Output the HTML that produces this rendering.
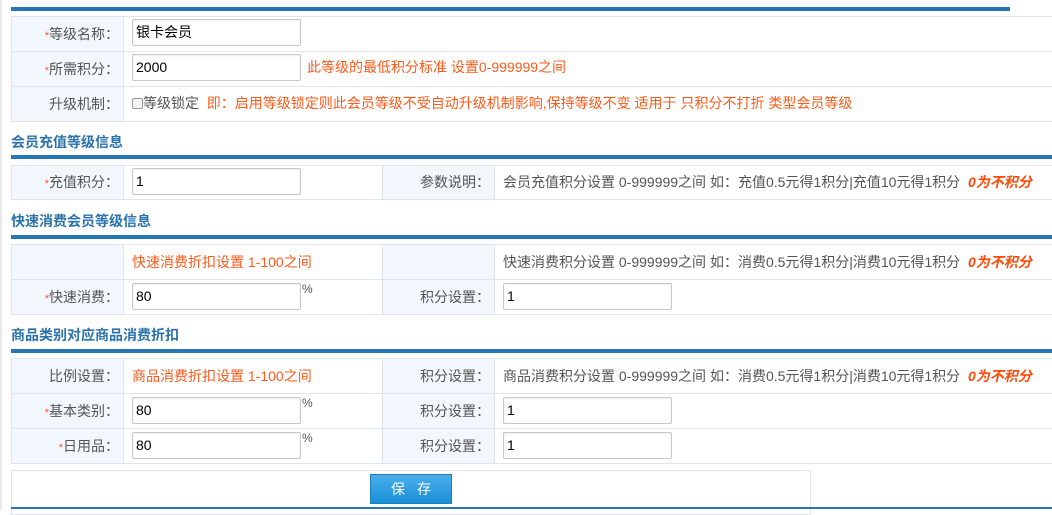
<!DOCTYPE html><html><head><meta charset="utf-8"><style>
*{margin:0;padding:0;box-sizing:border-box}
body{width:1052px;height:509px;background:#fff;font-family:"Liberation Sans","Noto Sans CJK SC",sans-serif;font-size:14px;color:#555;position:relative;overflow:hidden}
.a{position:absolute}
.bar{position:absolute;height:4px;background:#2578b5}
.lb{position:absolute;background:#f1f7fd;border:1px solid #e1e5ea;text-align:right;padding-right:4px;white-space:nowrap}
.vc{position:absolute;background:#fff;border:1px solid #e1e5ea;padding-left:8px;white-space:nowrap}
.s{color:#f53;font-size:11px}
.in{position:absolute;border:1px solid #c8c8c8;border-radius:2px;background:#fff;height:27px;padding-left:3px;line-height:25px;color:#000;font-size:14px;box-shadow:inset 0 1px 2px #eee}
.or{color:#ff5a1a}
.t{position:absolute;left:11px;color:#2a72ad;font-weight:bold;font-size:14px}
.pc{position:absolute;font-size:12px;color:#555}
.bi{color:#ff4a0a;font-weight:bold;font-style:italic}
</style></head><body>
<div class="a" style="left:0;top:0;width:2px;height:509px;background:#e8e8e8"></div>
<div class="bar" style="left:11px;top:7px;width:999px"></div>

<div class="lb" style="left:11px;top:16px;width:113px;height:36px;line-height:34px"><span class="s">*</span>等级名称：</div>
<div class="vc" style="left:123px;top:16px;width:940px;height:36px"></div>
<div class="in" style="left:132px;top:19px;width:169px">银卡会员</div>
<div class="lb" style="left:11px;top:51px;width:113px;height:36px;line-height:34px"><span class="s">*</span>所需积分：</div>
<div class="vc" style="left:123px;top:51px;width:940px;height:36px;line-height:30px;padding-left:183px"><span class="or">此等级的最低积分标准 设置0-999999之间</span></div>
<div class="in" style="left:132px;top:54px;width:169px">2000</div>
<div class="lb" style="left:11px;top:86px;width:113px;height:36px;line-height:34px">升级机制：</div>
<div class="vc" style="left:123px;top:86px;width:940px;height:36px;line-height:32px"><span style="display:inline-block;width:11px;height:11px;border:1px solid #999;border-radius:2px;background:#f4f4f4;vertical-align:-1px"></span>等级锁定 &nbsp;<span class="or">即：启用等级锁定则此会员等级不受自动升级机制影响,保持等级不变 适用于 只积分不打折 类型会员等级</span></div>

<div class="t" style="top:132px">会员充值等级信息</div>
<div class="bar" style="left:11px;top:155px;width:1041px"></div>
<div class="lb" style="left:11px;top:165px;width:113px;height:35px;line-height:33px"><span class="s">*</span>充值积分：</div>
<div class="vc" style="left:123px;top:165px;width:260px;height:35px"></div>
<div class="in" style="left:132px;top:168px;width:169px">1</div>
<div class="lb" style="left:382px;top:165px;width:113px;height:35px;line-height:33px">参数说明：</div>
<div class="vc" style="left:494px;top:165px;width:570px;height:35px;line-height:33px">会员充值积分设置 0-999999之间 如：充值0.5元得1积分|充值10元得1积分 &nbsp;<span class="bi">0为不积分</span></div>

<div class="t" style="top:211px">快速消费会员等级信息</div>
<div class="bar" style="left:11px;top:235px;width:1041px"></div>
<div class="lb" style="left:11px;top:244px;width:113px;height:36px"></div>
<div class="vc" style="left:123px;top:244px;width:260px;height:36px;line-height:34px"><span class="or">快速消费折扣设置 1-100之间</span></div>
<div class="lb" style="left:382px;top:244px;width:113px;height:36px"></div>
<div class="vc" style="left:494px;top:244px;width:570px;height:36px;line-height:34px">快速消费积分设置 0-999999之间 如：消费0.5元得1积分|消费10元得1积分 &nbsp;<span class="bi">0为不积分</span></div>
<div class="lb" style="left:11px;top:279px;width:113px;height:36px;line-height:34px"><span class="s">*</span>快速消费：</div>
<div class="vc" style="left:123px;top:279px;width:260px;height:36px"></div>
<div class="in" style="left:132px;top:283px;width:169px">80</div><div class="pc" style="left:302px;top:282px">%</div>
<div class="lb" style="left:382px;top:279px;width:113px;height:36px;line-height:34px">积分设置：</div>
<div class="vc" style="left:494px;top:279px;width:570px;height:36px"></div>
<div class="in" style="left:503px;top:283px;width:169px">1</div>

<div class="t" style="top:325px">商品类别对应商品消费折扣</div>
<div class="bar" style="left:11px;top:349px;width:1041px"></div>
<div class="lb" style="left:11px;top:358px;width:113px;height:36px;line-height:34px">比例设置：</div>
<div class="vc" style="left:123px;top:358px;width:260px;height:36px;line-height:34px"><span class="or">商品消费折扣设置 1-100之间</span></div>
<div class="lb" style="left:382px;top:358px;width:113px;height:36px;line-height:34px">积分设置：</div>
<div class="vc" style="left:494px;top:358px;width:570px;height:36px;line-height:34px">商品消费积分设置 0-999999之间 如：消费0.5元得1积分|消费10元得1积分 &nbsp;<span class="bi">0为不积分</span></div>
<div class="lb" style="left:11px;top:393px;width:113px;height:36px;line-height:34px"><span class="s">*</span>基本类别：</div>
<div class="vc" style="left:123px;top:393px;width:260px;height:36px"></div>
<div class="in" style="left:132px;top:397px;width:169px">80</div><div class="pc" style="left:302px;top:396px">%</div>
<div class="lb" style="left:382px;top:393px;width:113px;height:36px;line-height:34px">积分设置：</div>
<div class="vc" style="left:494px;top:393px;width:570px;height:36px"></div>
<div class="in" style="left:503px;top:397px;width:169px">1</div>
<div class="lb" style="left:11px;top:428px;width:113px;height:36px;line-height:34px"><span class="s">*</span>日用品：</div>
<div class="vc" style="left:123px;top:428px;width:260px;height:36px"></div>
<div class="in" style="left:132px;top:432px;width:169px">80</div><div class="pc" style="left:302px;top:431px">%</div>
<div class="lb" style="left:382px;top:428px;width:113px;height:36px;line-height:34px">积分设置：</div>
<div class="vc" style="left:494px;top:428px;width:570px;height:36px"></div>
<div class="in" style="left:503px;top:432px;width:169px">1</div>

<div class="a" style="left:11px;top:470px;width:800px;height:45px;border:1px solid #e1e5ea"></div>
<div class="a" style="left:370px;top:474px;width:82px;height:30px;background:linear-gradient(#4aaeea,#1a8fd6);border:1px solid #1a80c0;color:#fff;font-size:14px;text-align:center;line-height:28px;letter-spacing:12px;padding-left:12px">保存</div>
<div class="a" style="left:11px;top:507px;width:1041px;height:2px;background:#2578b5"></div>
</body></html>
